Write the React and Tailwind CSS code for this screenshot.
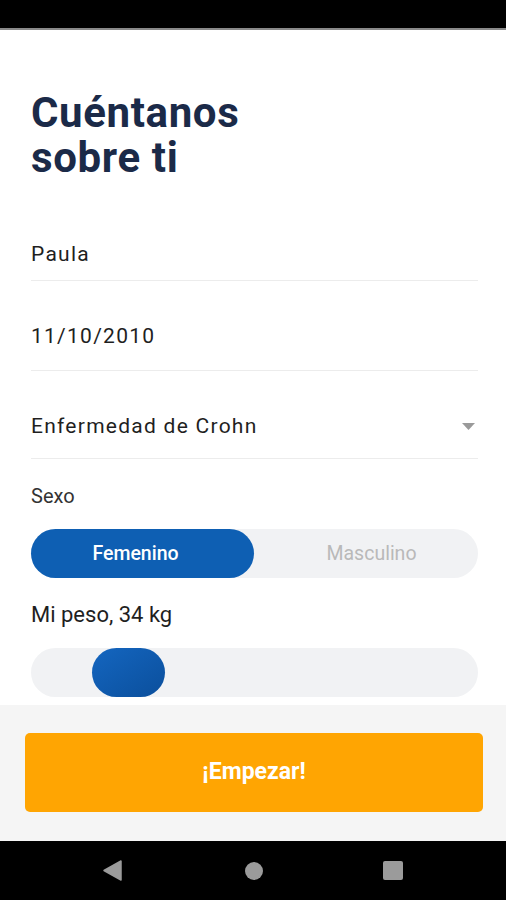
export default function App() {
  return (
    <div className="w-[506px] h-[900px] flex flex-col bg-white overflow-hidden" style={{ fontFamily: "Roboto, 'Noto Sans', sans-serif" }}>
      <div className="h-[28px] bg-black shrink-0" />
      <div className="h-[2px] bg-[#8a8a8a] shrink-0" />
      <div className="flex-1 flex flex-col pl-[31px] pr-[28px] pt-[60px] overflow-hidden">
        <h1 className="text-[42px] leading-[45px] font-bold text-[#1b2a48] tracking-[0.015em]">
          Cuéntanos<br />sobre ti
        </h1>
        <div className="mt-[62px] pb-[14px] border-b border-[#ececec] text-[21px] leading-[24px] text-[#1f1f1f] tracking-[0.06em]">Paula</div>
        <div className="pt-[43px] pb-[22px] border-b border-[#ececec] text-[21px] leading-[24px] text-[#1f1f1f] tracking-[0.06em]">11/10/2010</div>
        <div className="pt-[43px] pb-[20px] border-b border-[#ececec] text-[21px] leading-[24px] text-[#1f1f1f] tracking-[0.06em] flex items-center justify-between">
          <span>Enfermedad de Crohn</span>
          <svg width="13" height="7" viewBox="0 0 13 7" className="mr-[3px]"><path d="M0 0 L13 0 L6.5 7 Z" fill="#9a9a9a" /></svg>
        </div>
        <div className="mt-[25px] text-[20px] leading-[24px] text-[#333]">Sexo</div>
        <div className="mt-[21px] h-[49px] rounded-full bg-[#f1f2f4] flex">
          <div className="w-[223px] h-full rounded-full bg-[#0e5fb3] flex items-center justify-center pr-[14px] text-white text-[19.5px] font-medium">Femenino</div>
          <div className="flex-1 flex items-center justify-center pl-[11px] text-[#b9b9b9] text-[19.5px]">Masculino</div>
        </div>
        <div className="mt-[24px] text-[22px] leading-[26px] text-[#1f1f1f]">Mi peso, 34 kg</div>
        <div className="mt-[20px] h-[49px] rounded-full bg-[#f1f2f4] flex items-center pl-[61px]">
          <div className="w-[73px] h-[49px] rounded-full bg-gradient-to-br from-[#1466c0] to-[#0b4f9c]" />
        </div>
      </div>
      <div className="h-[136px] bg-[#f5f5f5] shrink-0 px-[25px] pt-[28px] pr-[23px]">
        <div className="h-[79px] rounded-[5px] bg-[#ffa502] flex items-center justify-center text-white text-[23px] font-bold">¡Empezar!</div>
      </div>
      <div className="h-[59px] bg-black shrink-0 flex items-center justify-between px-[103px]">
        <svg width="19" height="21" viewBox="0 0 19 21"><path d="M18 1 L18 20 L1 10.5 Z" fill="#9b9b9b" stroke="#9b9b9b" strokeWidth="1.5" strokeLinejoin="round" /></svg>
        <div className="w-[18px] h-[18px] rounded-full bg-[#9b9b9b] ml-[3px]" />
        <div className="w-[20px] h-[19px] rounded-[2px] bg-[#9b9b9b]" />
      </div>
    </div>
  );
}
